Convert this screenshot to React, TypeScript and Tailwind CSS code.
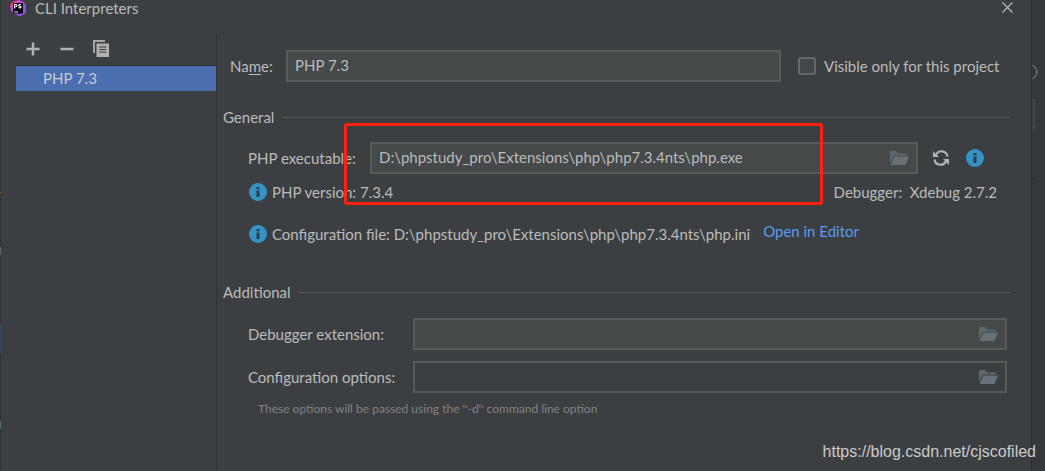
import React from "react";

function PhpStormLogo() {
  return (
    <svg width="16" height="17" viewBox="0 0 16 17" aria-hidden="true">
      <defs>
        <linearGradient id="ps" x1="0" y1="0" x2="1" y2="1">
          <stop offset="0" stopColor="#e93ba8" />
          <stop offset="0.35" stopColor="#c44be8" />
          <stop offset="0.7" stopColor="#8a4ff5" />
          <stop offset="1" stopColor="#c04be0" />
        </linearGradient>
      </defs>
      <path d="M0 4.500 4.500 1 9 0l5.500 2.500L16 6l-.5 7L10 16.500l-5-2.500L1 11z" fill="url(#ps)" />
      <path d="M0 4.500 4.500 1H8L3 6z" fill="#ff318c" />
      <rect x="3" y="3" width="10" height="10.500" fill="#000" />
      <path d="M4.500 8.500V4.500h1.400a1 1 0 0 1 0 2.200H4.500M11 5c-.8-.7-2.300-.5-2.300.4 0 1.100 2.400.5 2.400 1.700 0 .9-1.700 1-2.600.3M4.300 12h3.700" stroke="#fff" strokeWidth="1.100" fill="none" />
    </svg>
  );
}

function InfoIcon() {
  return (
    <svg width="18" height="18" viewBox="0 0 18 18" className="shrink-0" aria-hidden="true">
      <circle cx="9" cy="9" r="9" fill="#3592c4" />
      <path d="M7.500 4h3v2.200h-3zM7.500 7.500h3V14h-3z" fill="#2e3d47" />
    </svg>
  );
}

function FolderIcon() {
  return (
    <svg width="19" height="14" viewBox="0 0 19 14" aria-hidden="true">
      <path d="M0 0h6l2 2.500h9V4.500H4L0 12z" fill="#5f676b" />
      <path d="M4.500 5.500H19L15.500 14H.5z" fill="#667075" />
    </svg>
  );
}

type PathFieldProps = { id: string; value?: string; tone: string };

function PathField({ id, value = "", tone }: PathFieldProps) {
  return (
    <div className={`flex h-8 min-w-0 flex-1 items-center border-2 border-[#585b5c] ${tone}`}>
      <input id={id} defaultValue={value} className="h-full min-w-0 flex-1 bg-transparent px-[7px] pb-[2px] outline-none" />
      <button type="button" aria-label="Browse" className="mr-[7px]">
        <FolderIcon />
      </button>
    </div>
  );
}

function SectionTitle({ children }: { children: React.ReactNode }) {
  return (
    <h2 className="flex h-[22px] items-center gap-[7px] pr-[21px] pl-[6px]">
      {children}
      <span className="h-px flex-1 bg-[#55585a]" />
    </h2>
  );
}

function Sidebar() {
  return (
    <aside className="w-[216px] shrink-0 border-r border-[#323334] pl-[15px]">
      <div className="flex h-8 items-center gap-5 border-b border-[#323334] pb-[2px] pl-[10px]">
        <button type="button" aria-label="Add">
          <svg width="14" height="14" viewBox="0 0 14 14">
            <path d="M.5 7h13M7 .5v13" stroke="#afb1b3" strokeWidth="2.500" />
          </svg>
        </button>
        <button type="button" aria-label="Remove">
          <svg width="14" height="14" viewBox="0 0 14 14">
            <path d="M.5 7h13" stroke="#afb1b3" strokeWidth="2.500" />
          </svg>
        </button>
        <button type="button" aria-label="Copy" className="-ml-px">
          <svg width="16" height="17" viewBox="0 0 16 17">
            <path d="M0 0h12v2H2v11H0z" fill="#a3a5a7" />
            <path d="M3.500 3.500H16V17H3.500z" fill="#afb1b3" />
            <path d="M6 7h7.500M6 9.500h7.500M6 12h7.500" stroke="#3c3f41" strokeWidth="1.200" />
          </svg>
        </button>
      </div>
      <ul>
        <li>
          <button type="button" className="flex h-[25px] w-full items-center bg-[#4b6eaf] pb-[2px] pl-[27px] text-[#c5cbd5]">
            PHP 7.3
          </button>
        </li>
      </ul>
    </aside>
  );
}

function Settings() {
  return (
    <main className="min-w-0 flex-1 pt-4">
      <div className="flex h-8 items-center pr-7 pl-[13px]">
        <label htmlFor="name" className="w-14 shrink-0">
          Na<span className="underline underline-offset-2">m</span>e:
        </label>
        <input
          id="name"
          defaultValue="PHP 7.3"
          className="h-8 min-w-0 flex-1 border-2 border-[#585b5c] bg-[#45494a] px-[7px] pb-[2px] outline-none"
        />
        <label className="ml-[17px] flex w-[205px] shrink-0 items-center gap-2">
          <input type="checkbox" className="size-[18px] appearance-none rounded-[3px] border-2 border-[#65686a] bg-[#43474a]" />
          Visible only for this project
        </label>
      </div>

      <section className="mt-6">
        <SectionTitle>General</SectionTitle>
        <div className="mt-[14px] flex h-8 items-center pr-[47px] pl-[31px]">
          <label htmlFor="executable" className="w-[122px] shrink-0">
            PHP executable:
          </label>
          <PathField id="executable" value="D:\phpstudy_pro\Extensions\php\php7.3.4nts\php.exe" tone="bg-[#45494a]" />
          <button type="button" aria-label="Reload" className="ml-[15px]">
            <svg width="16" height="16" viewBox="0 0 16 16" fill="none" stroke="#afb1b3" strokeWidth="2.200">
              <path d="M3 5A6 6 0 0 1 14.500 6.500M13 11A6 6 0 0 1 1.500 9.500" />
              <path d="M0 1v6h6zM16 15V9h-6z" fill="#afb1b3" stroke="none" />
            </svg>
          </button>
          <button type="button" aria-label="Information" className="ml-[17px]">
            <InfoIcon />
          </button>
        </div>
        <div className="mt-[7px] flex h-[22px] items-center gap-[5px] pr-[34px] pl-8">
          <InfoIcon />
          <span>PHP version: 7.3.4</span>
          <span className="ml-auto">Debugger:&nbsp; Xdebug 2.7.2</span>
        </div>
        <div className="mt-5 flex h-[22px] items-center gap-[5px] pl-8">
          <InfoIcon />
          <span className="whitespace-nowrap">Configuration file: D:\phpstudy_pro\Extensions\php\php7.3.4nts\php.ini</span>
          <a href="#editor" className="ml-2 pb-[6px] whitespace-nowrap text-[#589df6]">
            Open in Editor
          </a>
        </div>
      </section>

      <section className="mt-9">
        <SectionTitle>Additional</SectionTitle>
        <div className="mt-[15px] flex h-8 items-center pr-6 pl-[31px]">
          <label htmlFor="extension" className="w-[165px] shrink-0">
            Debugger extension:
          </label>
          <PathField id="extension" tone="bg-[#45494a]" />
        </div>
        <div className="mt-[11px] flex h-8 items-center pr-6 pl-[31px]">
          <label htmlFor="options" className="w-[165px] shrink-0">
            Configuration options:
          </label>
          <PathField id="options" tone="bg-[#3c3f41]" />
        </div>
        <p className="mt-[7px] pl-[41px] text-[12px] leading-[18px] text-[#808283]">
          These options will be passed using the ''-d'' command line option
        </p>
      </section>
    </main>
  );
}

export default function App() {
  return (
    <div className="relative flex min-h-screen overflow-hidden bg-[#313335] font-['Lato',sans-serif] text-[15px] leading-[22px] text-[#bbbbbb]">
      <div className="w-px shrink-0">
        <svg width="1" height="471" viewBox="0 0 1 471" aria-hidden="true">
          <path d="M0 192h1v2H0z" fill="#6b5030" />
          <path d="M0 247h1v8H0zM0 421h1v8H0z" fill="#56686a" />
          <path d="M0 324h1v29H0z" fill="#34466b" />
        </svg>
      </div>
      <div className="flex min-w-0 flex-1 flex-col bg-[#3c3f41]">
        <header className="flex h-[34px] items-start justify-between pr-[18px] pl-[9px]">
          <h1 className="flex items-center gap-[9px] leading-[17px]">
            <PhpStormLogo />
            CLI Interpreters
          </h1>
          <button type="button" aria-label="Close" className="mt-[2px]">
            <svg width="11" height="11" viewBox="0 0 11 11">
              <path d="M.5.5l10 10M10.500.5l-10 10" stroke="#b4b6b7" strokeWidth="1.200" />
            </svg>
          </button>
        </header>
        <div className="flex flex-1">
          <Sidebar />
          <Settings />
        </div>
      </div>
      <div className="w-[14px] shrink-0 border-l border-[#2b2b2c] bg-[#35383a] pt-16">
        <svg width="10" height="120" viewBox="0 0 10 120" fill="none" aria-hidden="true">
          <path d="M-2 1a7 7 0 0 1 0 14" stroke="#84898c" />
          <path d="M0 36h2v28H0" stroke="#55585a" />
          <path d="M0 114.500h5" stroke="#2b2b2c" />
        </svg>
      </div>
      <div className="pointer-events-none absolute top-[123px] left-[344px] h-[82px] w-[479px] rounded-[3px] border-3 border-[#ff2114]" />
      <p className="absolute right-[9px] bottom-[8px] font-['Liberation_Sans',sans-serif] text-[16px] text-[#c9cacb]">
        https://blog.csdn.net/cjscofiled
      </p>
    </div>
  );
}
